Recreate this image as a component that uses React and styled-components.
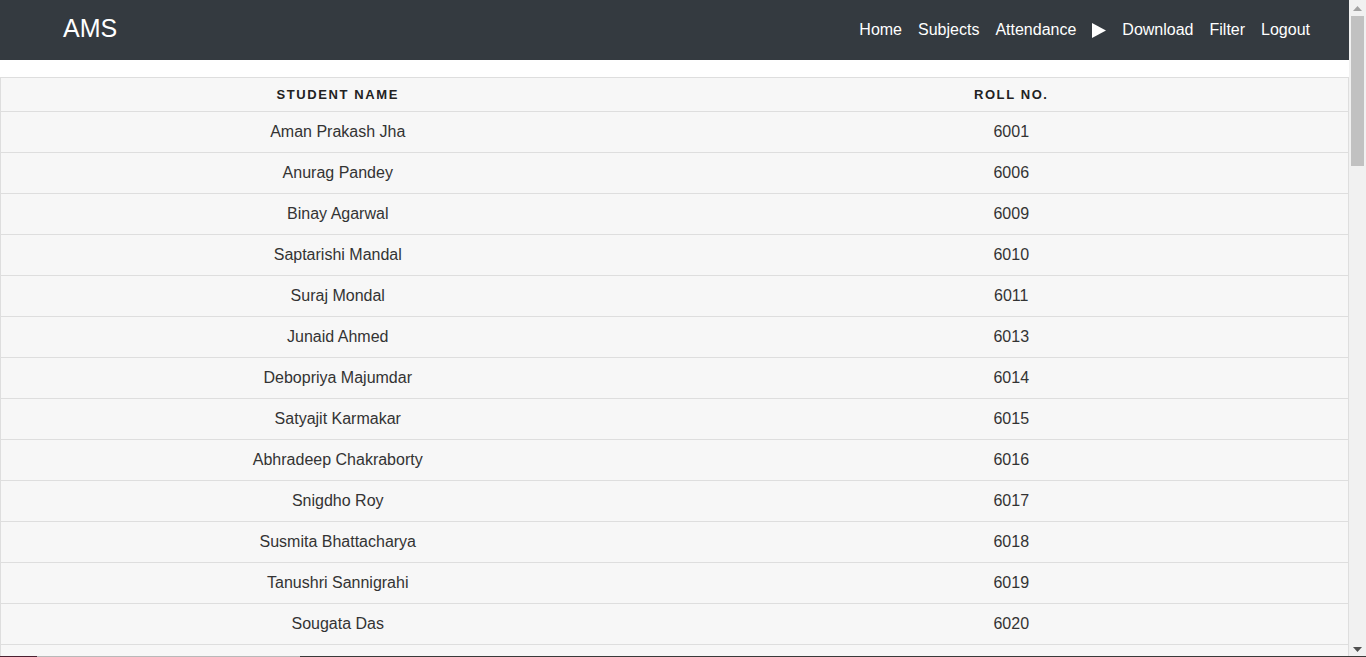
import React from "react";
import styled, { createGlobalStyle } from "styled-components";

const Global = createGlobalStyle`
  html, body { margin: 0; padding: 0; background: #fff; }
  body { font-family: "Liberation Sans", Arial, sans-serif; color: #212529; }
`;

const Page = styled.div`
  margin-right: 17px;
`;

const Nav = styled.nav`
  height: 60px;
  background: #343a40;
  display: flex;
  align-items: center;
  justify-content: space-between;
  padding: 0 31px 0 63px;
`;

const Brand = styled.a`
  color: #fff;
  font-size: 25px;
  text-decoration: none;
  line-height: 1;
  margin-top: -4px;
`;

const Links = styled.ul`
  display: flex;
  align-items: center;
  list-style: none;
  margin: 0;
  padding: 0;
`;

const LinkItem = styled.li`
  color: #fff;
  font-size: 16px;
  padding: 0 8px;
  display: flex;
  align-items: center;
`;

const Main = styled.main`
  padding-top: 17px;
`;

const Table = styled.table`
  width: 100%;
  border-collapse: collapse;
  background: #f7f7f7;
  border: 1px solid #dedede;
`;

const Th = styled.th`
  height: 33px;
  font-size: 13px;
  font-weight: bold;
  letter-spacing: 1.6px;
  text-transform: uppercase;
  color: #222;
  text-align: center;
  width: 50%;
  padding: 0;
  border-bottom: 1px solid #dedede;
`;

const Td = styled.td`
  height: 40px;
  font-size: 16px;
  color: #333;
  text-align: center;
  padding: 0;
  border-bottom: 1px solid #dedede;
`;

const ScrollRail = styled.div`
  position: fixed;
  top: 0;
  right: 0;
  width: 17px;
  height: 100vh;
  background: #f1f1f1;
  display: flex;
  flex-direction: column;
  align-items: center;
  z-index: 5;
`;

const ScrollArrow = styled.div`
  height: 16px;
  width: 17px;
  display: flex;
  align-items: center;
  justify-content: center;
  flex: none;
`;

const ScrollThumb = styled.div`
  width: 13px;
  height: 150px;
  background: #c1c1c1;
  flex: none;
`;

const ScrollSpacer = styled.div`
  flex: 1;
`;

const ScreenEdge = styled.div`
  position: fixed;
  left: 0;
  right: 0;
  bottom: 0;
  height: 1px;
  background: linear-gradient(
    to right,
    #4a2030 0,
    #4a2030 37px,
    #b9b9b9 37px,
    #b9b9b9 300px,
    #3a3a3a 300px
  );
  z-index: 6;
`;

const students = [
  ["Aman Prakash Jha", "6001"],
  ["Anurag Pandey", "6006"],
  ["Binay Agarwal", "6009"],
  ["Saptarishi Mandal", "6010"],
  ["Suraj Mondal", "6011"],
  ["Junaid Ahmed", "6013"],
  ["Debopriya Majumdar", "6014"],
  ["Satyajit Karmakar", "6015"],
  ["Abhradeep Chakraborty", "6016"],
  ["Snigdho Roy", "6017"],
  ["Susmita Bhattacharya", "6018"],
  ["Tanushri Sannigrahi", "6019"],
  ["Sougata Das", "6020"],
  ["Rohit Sen", "6021"],
  ["Priya Das", "6022"],
];

const Play = () => (
  <svg width="14" height="15" viewBox="0 0 14 15">
    <path d="M0 0 L14 7.5 L0 15 Z" fill="#fff" />
  </svg>
);

const Arrow = ({ down }) => (
  <svg width="9" height="5" viewBox="0 0 9 5">
    <path d={down ? "M0 0 L9 0 L4.5 5 Z" : "M4.5 0 L9 5 L0 5 Z"} fill={down ? "#505050" : "#a3a3a3"} />
  </svg>
);

export default function App() {
  return (
    <Page>
      <Global />
      <Nav>
        <Brand>AMS</Brand>
        <Links>
          <LinkItem>Home</LinkItem>
          <LinkItem>Subjects</LinkItem>
          <LinkItem>Attendance</LinkItem>
          <LinkItem><Play /></LinkItem>
          <LinkItem>Download</LinkItem>
          <LinkItem>Filter</LinkItem>
          <LinkItem>Logout</LinkItem>
        </Links>
      </Nav>
      <Main>
        <Table>
          <thead>
            <tr>
              <Th>Student Name</Th>
              <Th>Roll No.</Th>
            </tr>
          </thead>
          <tbody>
            {students.map(([n, r]) => (
              <tr key={r}>
                <Td>{n}</Td>
                <Td>{r}</Td>
              </tr>
            ))}
          </tbody>
        </Table>
      </Main>
      <ScrollRail>
        <ScrollArrow><Arrow /></ScrollArrow>
        <ScrollThumb />
        <ScrollSpacer />
        <ScrollArrow><Arrow down /></ScrollArrow>
      </ScrollRail>
      <ScreenEdge />
    </Page>
  );
}
